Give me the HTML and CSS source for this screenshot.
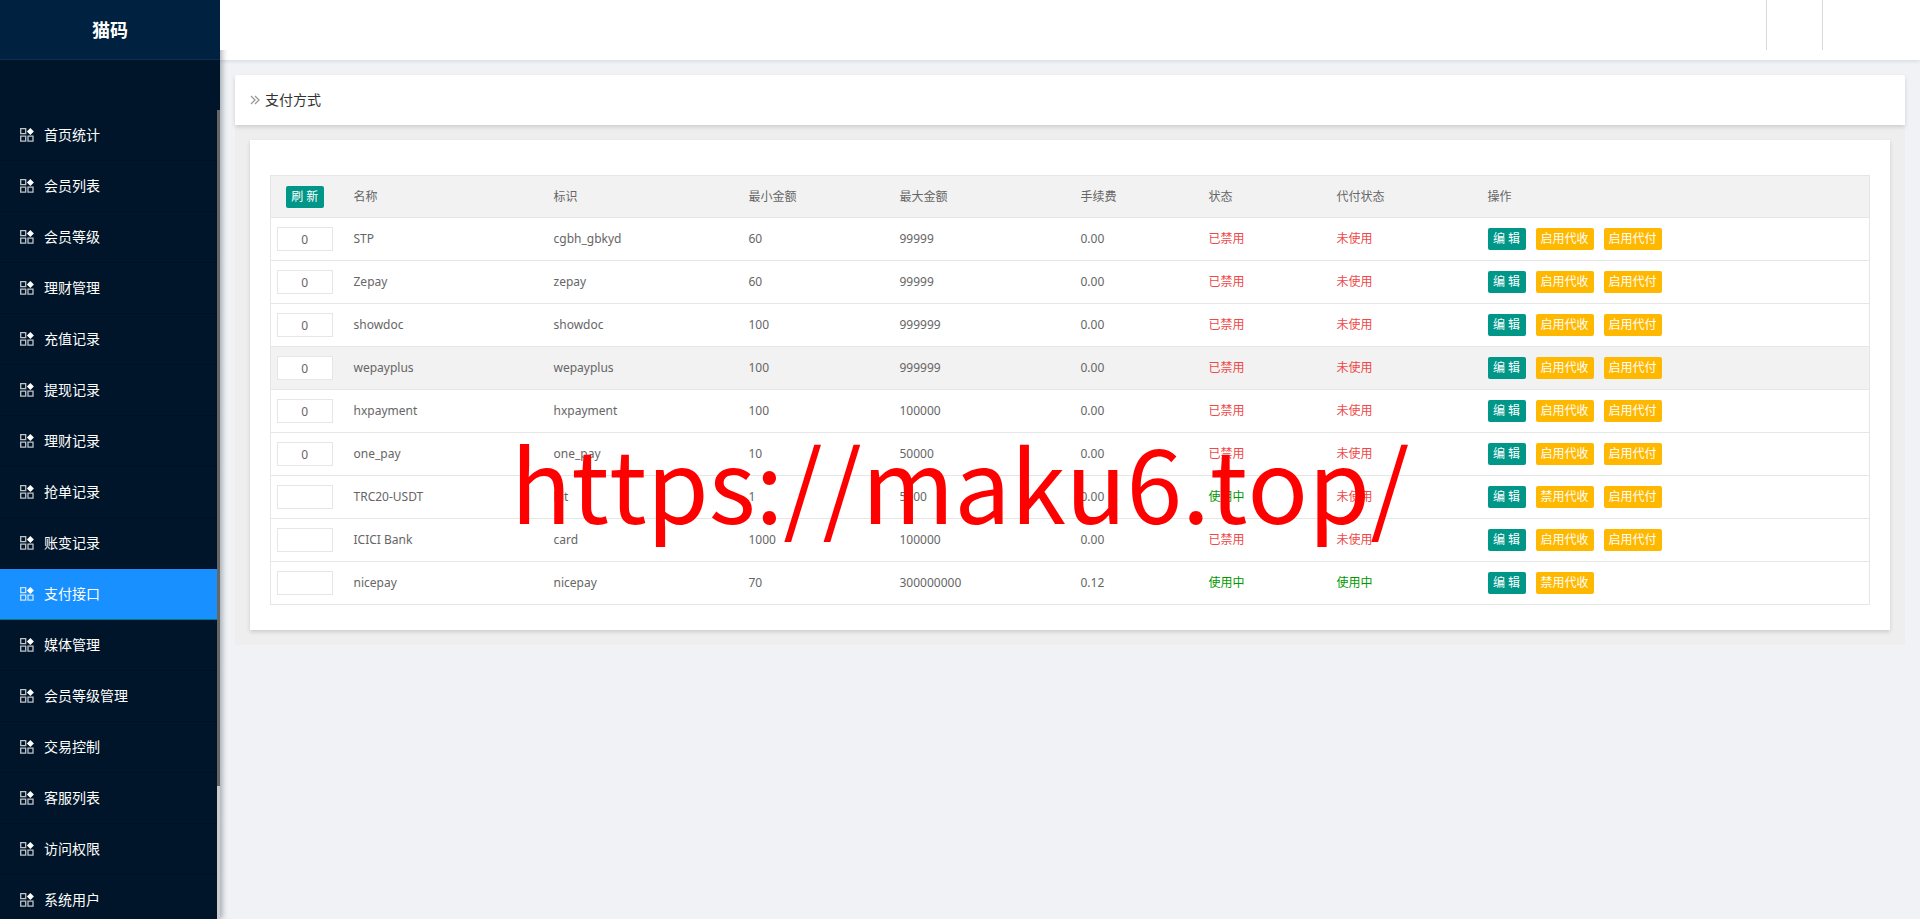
FILE: index.html
```html
<!DOCTYPE html>
<html lang="zh-CN">
<head>
<meta charset="UTF-8">
<meta name="viewport" content="width=device-width, initial-scale=1.0">
<title>支付方式</title>
<link rel="stylesheet" href="styles.css">
</head>
<body>
  <svg class="sprite" width="0" height="0" aria-hidden="true">
    <symbol id="icon-app" viewBox="0 0 14 14">
      <path d="M.7.7h5v5h-5zM.7 8.1h5v5h-5zM8 8.1h5v5H8z" fill="none" stroke="currentColor" stroke-width="1.3"/>
      <path d="M10.4 0l3.5 3.5L10.4 7 6.9 3.5z" fill="#fff"/>
    </symbol>
  </svg>

  <aside class="sidebar">
    <h1 class="brand">猫码</h1>
    <div class="side-scroll">
      <nav class="menu">
        <a href="#"><svg class="icon"><use href="#icon-app"/></svg>首页统计</a>
        <a href="#"><svg class="icon"><use href="#icon-app"/></svg>会员列表</a>
        <a href="#"><svg class="icon"><use href="#icon-app"/></svg>会员等级</a>
        <a href="#"><svg class="icon"><use href="#icon-app"/></svg>理财管理</a>
        <a href="#"><svg class="icon"><use href="#icon-app"/></svg>充值记录</a>
        <a href="#"><svg class="icon"><use href="#icon-app"/></svg>提现记录</a>
        <a href="#"><svg class="icon"><use href="#icon-app"/></svg>理财记录</a>
        <a href="#"><svg class="icon"><use href="#icon-app"/></svg>抢单记录</a>
        <a href="#"><svg class="icon"><use href="#icon-app"/></svg>账变记录</a>
        <a href="#" class="active"><svg class="icon"><use href="#icon-app"/></svg>支付接口</a>
        <a href="#"><svg class="icon"><use href="#icon-app"/></svg>媒体管理</a>
        <a href="#"><svg class="icon"><use href="#icon-app"/></svg>会员等级管理</a>
        <a href="#"><svg class="icon"><use href="#icon-app"/></svg>交易控制</a>
        <a href="#"><svg class="icon"><use href="#icon-app"/></svg>客服列表</a>
        <a href="#"><svg class="icon"><use href="#icon-app"/></svg>访问权限</a>
        <a href="#"><svg class="icon"><use href="#icon-app"/></svg>系统用户</a>
      </nav>
      <div class="scrollbar"><div class="scrollbar-thumb"></div></div>
    </div>
  </aside>

  <div class="page">
    <header class="topbar">
      <div class="topbar-inner">
        <div class="topbar-item"></div>
        <div class="topbar-item topbar-user"></div>
      </div>
    </header>

    <main class="content">
      <h2 class="page-title">
        <svg class="arrows" viewBox="0 0 10 10"><path d="M1 1l4 4-4 4M5 1l4 4-4 4" fill="none" stroke="currentColor" stroke-width="1.3"/></svg>
        支付方式
      </h2>
      <section class="card">
        <table class="pay-table">
          <colgroup>
            <col class="col-sort">
            <col class="col-name">
            <col class="col-code">
            <col class="col-min">
            <col class="col-max">
            <col class="col-fee">
            <col class="col-status">
            <col class="col-payout">
            <col>
          </colgroup>
          <thead>
            <tr>
              <th class="sort"><button type="button" class="btn">刷 新</button></th>
              <th>名称</th>
              <th>标识</th>
              <th>最小金额</th>
              <th>最大金额</th>
              <th>手续费</th>
              <th>状态</th>
              <th>代付状态</th>
              <th>操作</th>
            </tr>
          </thead>
          <tbody>
            <tr>
              <td class="sort"><input type="text" value="0" aria-label="排序 STP"></td>
              <td>STP</td>
              <td>cgbh_gbkyd</td>
              <td>60</td>
              <td>99999</td>
              <td>0.00</td>
              <td class="off">已禁用</td>
              <td class="off">未使用</td>
              <td><div class="actions"><button type="button" class="btn">编 辑</button><button type="button" class="btn btn-warm">启用代收</button><button type="button" class="btn btn-warm">启用代付</button></div></td>
            </tr>
            <tr>
              <td class="sort"><input type="text" value="0" aria-label="排序 Zepay"></td>
              <td>Zepay</td>
              <td>zepay</td>
              <td>60</td>
              <td>99999</td>
              <td>0.00</td>
              <td class="off">已禁用</td>
              <td class="off">未使用</td>
              <td><div class="actions"><button type="button" class="btn">编 辑</button><button type="button" class="btn btn-warm">启用代收</button><button type="button" class="btn btn-warm">启用代付</button></div></td>
            </tr>
            <tr>
              <td class="sort"><input type="text" value="0" aria-label="排序 showdoc"></td>
              <td>showdoc</td>
              <td>showdoc</td>
              <td>100</td>
              <td>999999</td>
              <td>0.00</td>
              <td class="off">已禁用</td>
              <td class="off">未使用</td>
              <td><div class="actions"><button type="button" class="btn">编 辑</button><button type="button" class="btn btn-warm">启用代收</button><button type="button" class="btn btn-warm">启用代付</button></div></td>
            </tr>
            <tr class="hover">
              <td class="sort"><input type="text" value="0" aria-label="排序 wepayplus"></td>
              <td>wepayplus</td>
              <td>wepayplus</td>
              <td>100</td>
              <td>999999</td>
              <td>0.00</td>
              <td class="off">已禁用</td>
              <td class="off">未使用</td>
              <td><div class="actions"><button type="button" class="btn">编 辑</button><button type="button" class="btn btn-warm">启用代收</button><button type="button" class="btn btn-warm">启用代付</button></div></td>
            </tr>
            <tr>
              <td class="sort"><input type="text" value="0" aria-label="排序 hxpayment"></td>
              <td>hxpayment</td>
              <td>hxpayment</td>
              <td>100</td>
              <td>100000</td>
              <td>0.00</td>
              <td class="off">已禁用</td>
              <td class="off">未使用</td>
              <td><div class="actions"><button type="button" class="btn">编 辑</button><button type="button" class="btn btn-warm">启用代收</button><button type="button" class="btn btn-warm">启用代付</button></div></td>
            </tr>
            <tr>
              <td class="sort"><input type="text" value="0" aria-label="排序 one_pay"></td>
              <td>one_pay</td>
              <td>one_pay</td>
              <td>10</td>
              <td>50000</td>
              <td>0.00</td>
              <td class="off">已禁用</td>
              <td class="off">未使用</td>
              <td><div class="actions"><button type="button" class="btn">编 辑</button><button type="button" class="btn btn-warm">启用代收</button><button type="button" class="btn btn-warm">启用代付</button></div></td>
            </tr>
            <tr>
              <td class="sort"><input type="text" value="" aria-label="排序 TRC20-USDT"></td>
              <td>TRC20-USDT</td>
              <td>bit</td>
              <td>1</td>
              <td>5000</td>
              <td>0.00</td>
              <td class="on">使用中</td>
              <td class="off">未使用</td>
              <td><div class="actions"><button type="button" class="btn">编 辑</button><button type="button" class="btn btn-warm">禁用代收</button><button type="button" class="btn btn-warm">启用代付</button></div></td>
            </tr>
            <tr>
              <td class="sort"><input type="text" value="" aria-label="排序 ICICI Bank"></td>
              <td>ICICI Bank</td>
              <td>card</td>
              <td>1000</td>
              <td>100000</td>
              <td>0.00</td>
              <td class="off">已禁用</td>
              <td class="off">未使用</td>
              <td><div class="actions"><button type="button" class="btn">编 辑</button><button type="button" class="btn btn-warm">启用代收</button><button type="button" class="btn btn-warm">启用代付</button></div></td>
            </tr>
            <tr>
              <td class="sort"><input type="text" value="" aria-label="排序 nicepay"></td>
              <td>nicepay</td>
              <td>nicepay</td>
              <td>70</td>
              <td>300000000</td>
              <td>0.12</td>
              <td class="on">使用中</td>
              <td class="on">使用中</td>
              <td><div class="actions"><button type="button" class="btn">编 辑</button><button type="button" class="btn btn-warm">禁用代收</button></div></td>
            </tr>
          </tbody>
        </table>
      </section>
    </main>
  </div>

  <div class="watermark">https://maku6.top/</div>
</body>
</html>
```

FILE: styles.css
```css
* {
  box-sizing: border-box;
}

body {
  margin: 0;
  height: 100vh;
  display: flex;
  overflow: hidden;
  background-color: #f0f2f5;
  color: #333;
  font-family: "Noto Sans", "Noto Sans CJK SC", sans-serif;
  font-size: 14px;
  line-height: 20px;
}

.sprite {
  position: absolute;
}

/* sidebar */
.sidebar {
  position: relative;
  z-index: 1;
  flex: 0 0 220px;
  display: flex;
  flex-direction: column;
  background-color: #001529;
  box-shadow: 2px 0 6px rgba(0, 21, 41, 0.35);
}

.brand {
  flex: none;
  height: 60px;
  margin: 0 0 50px;
  border-bottom: 1px solid #0c2d51;
  background-color: #002140;
  color: #fff;
  font-size: 18px;
  line-height: 60px;
  text-align: center;
}

.side-scroll {
  flex: 1;
  min-height: 0;
  display: flex;
}

.menu {
  flex: 1;
  overflow: hidden;
}

.menu a {
  display: flex;
  align-items: center;
  gap: 10px;
  height: 51px;
  padding-left: 20px;
  border-bottom: 1px solid #001123;
  color: #fff;
  text-decoration: none;
}

.menu a.active {
  background-color: #1890ff;
  border-bottom-color: #007d80;
}

.icon {
  width: 14px;
  height: 14px;
  color: rgba(255, 255, 255, 0.75);
}

.scrollbar {
  width: 3px;
  background-color: #ccc;
}

.scrollbar-thumb {
  height: 83.5%;
  background-color: #666;
}

/* right side */
.page {
  flex: 1;
  min-width: 0;
}

.topbar {
  height: 60px;
  background-color: #fff;
  box-shadow: 0 1px 4px rgba(0, 21, 41, 0.12);
}

/* stays above the sidebar shadow */
.topbar-inner {
  position: relative;
  z-index: 2;
  display: flex;
  justify-content: flex-end;
  height: 50px;
  background-color: #fff;
}

.topbar-item {
  width: 56px;
  border-left: 1px solid #d9d9d9;
}

.topbar-user {
  width: 98px;
}

.content {
  margin: 15px;
  padding-bottom: 15px;
  background-color: #eee;
}

.page-title {
  display: flex;
  align-items: center;
  gap: 5px;
  height: 50px;
  margin: 0 0 15px;
  padding-left: 15px;
  border-radius: 2px 2px 0 0;
  background-color: #fff;
  box-shadow: 0 2px 4px rgba(0, 0, 0, 0.14);
  font-size: 14px;
  font-weight: normal;
}

.arrows {
  width: 10px;
  height: 10px;
  color: #999;
}

.card {
  margin: 0 15px;
  padding: 35px 20px 25px;
  background-color: #fff;
  box-shadow: 0 2px 4px rgba(0, 0, 0, 0.14);
}

/* table */
.pay-table {
  width: 100%;
  table-layout: fixed;
  border-collapse: collapse;
  border: 1px solid #e6e6e6;
  color: #666;
  font-size: 12px;
}

.col-sort { width: 68px; }
.col-name { width: 200px; }
.col-code { width: 195px; }
.col-min { width: 151px; }
.col-max { width: 181px; }
.col-fee { width: 128px; }
.col-status { width: 128px; }
.col-payout { width: 151px; }

.pay-table th,
.pay-table td {
  height: 43px;
  padding: 0 15px;
  border-bottom: 1px solid #e6e6e6;
  font-weight: normal;
  text-align: left;
}

.pay-table th {
  height: 42px;
}

.pay-table thead tr,
.pay-table tr.hover {
  background-color: #f2f2f2;
}

.pay-table .sort {
  padding: 0;
  text-align: center;
}

.pay-table input {
  display: block;
  width: 56px;
  height: 24px;
  margin: 0 auto;
  padding: 0;
  border: 1px solid #e6e6e6;
  background-color: #fff;
  color: #666;
  font: inherit;
  text-align: center;
}

.pay-table .off {
  color: #f04848;
}

.pay-table .on {
  color: #090;
}

.actions {
  display: flex;
  gap: 10px;
}

.btn {
  min-width: 38px;
  height: 22px;
  padding: 0 5px;
  border: none;
  border-radius: 2px;
  background-color: #009688;
  color: #fff;
  font-family: inherit;
  font-size: 12px;
  line-height: 22px;
  white-space: nowrap;
  cursor: pointer;
}

.btn-warm {
  background-color: #ffb800;
}

.btn:hover {
  opacity: 0.8;
}

.watermark {
  position: fixed;
  z-index: 3;
  top: 409px;
  left: 0;
  right: 0;
  color: #f00;
  font-family: "Noto Sans CJK SC", sans-serif;
  font-size: 100px;
  font-kerning: none;
  line-height: 144px;
  text-align: center;
  pointer-events: none;
}
```
